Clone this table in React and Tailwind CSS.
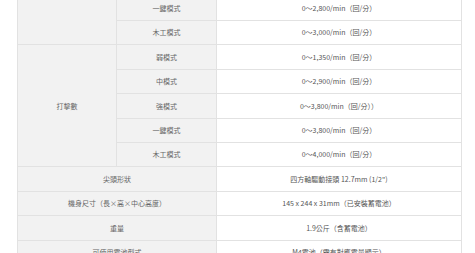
export default function App() {
  const cell = "flex items-center justify-center border-b border-[#e2e2e2] text-center";
  const label = `${cell} bg-[#f2f2f2] border-r text-[#666]`;
  const value = `${cell} bg-white border-r text-[#555]`;

  const modes = [
    ["弱模式", "0～1,350/min（回/分）"],
    ["中模式", "0～2,900/min（回/分）"],
    ["強模式", "0～3,800/min（回/分））"],
    ["一鍵模式", "0～3,800/min（回/分）"],
    ["木工模式", "0～4,000/min（回/分）"],
  ];

  const specs = [
    ["尖頭形狀", "四方軸驅動接頭 12.7mm (1/2\")"],
    ["機身尺寸（長×高×中心高度）", "145 x 244 x 31mm（已安裝蓄電池）"],
    ["重量", "1.9公斤（含蓄電池）"],
    ["可使用電池型式", "M4電池（需有對應電量顯示）"],
  ];

  return (
    <div className="w-[475px] h-[253px] overflow-hidden bg-white font-['Noto_Sans_CJK_TC','Noto_Sans',sans-serif] text-[7px]">
      <div className="ml-[17px] mt-[-3.4px] w-[444px] grid grid-cols-[99px_100px_245px] grid-rows-[repeat(11,24.4px)] border-l border-[#e2e2e2]">
        {/* previous group, label is above the fold */}
        <div className={`${label} row-span-2`}></div>
        <div className={label}>一鍵模式</div>
        <div className={value}>0～2,800/min（回/分）</div>
        <div className={label}>木工模式</div>
        <div className={value}>0～3,000/min（回/分）</div>

        <div className={`${label} row-span-5`}>打擊數</div>
        {modes.map(([name, val]) => (
          <div key={name} className="contents">
            <div className={label}>{name}</div>
            <div className={value}>{val}</div>
          </div>
        ))}

        {specs.map(([name, val]) => (
          <div key={name} className="contents">
            <div className={`${label} col-span-2`}>{name}</div>
            <div className={value}>{val}</div>
          </div>
        ))}
      </div>
    </div>
  );
}
